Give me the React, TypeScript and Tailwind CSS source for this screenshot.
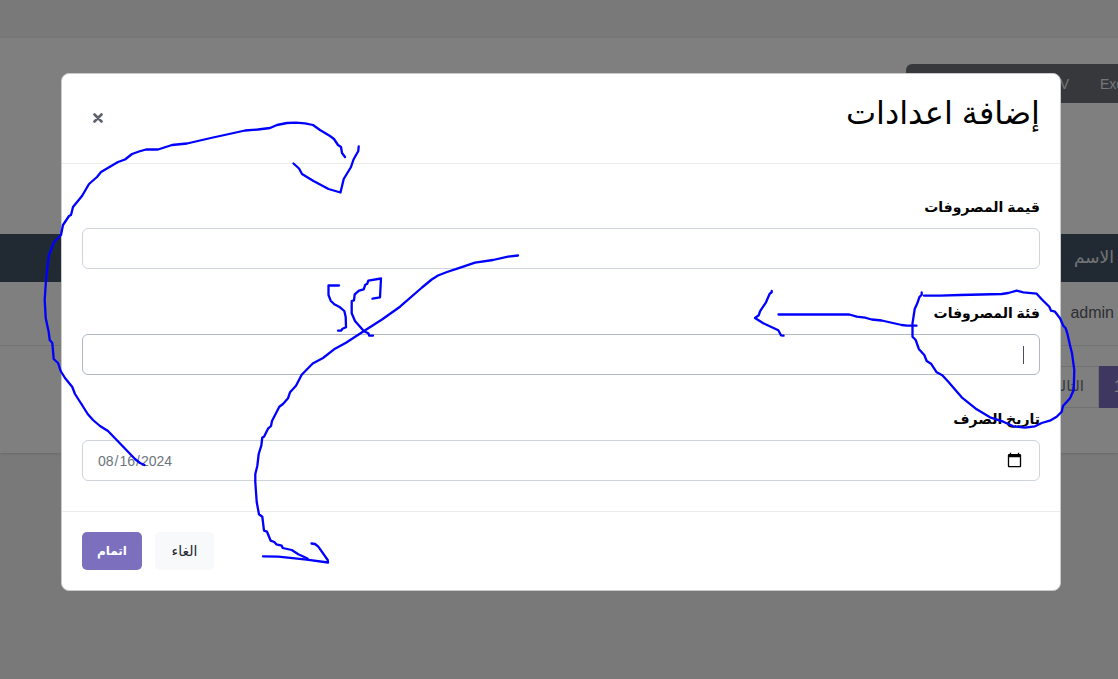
const strokes = [
  "345,157 342,153 341,147 338,145 334,139 330,136 320,130 313,125 305,123.300 296,122.700 287,123 277,125 270,128 258,129.500 245,130.500 220,136 213,137.500 187,143.500 172,145 158,149.500 146,149.500 139,151.500 132,154 125,159.500 118,162 101,172 97,177 89,184 82,196 73,207 71,215 69,216 63,225 61,235 54,242 48.700,256 46,280 44.700,300 45.700,318 48.700,332 49.700,340 52.300,343 53.700,359 58,363 60.700,371 65,378 72.300,387 75,394 83.300,407 87.700,414 93,420 100,426 108,431 135,459 140,463 144.500,465",
  "293.500,163.500 299,168.500 302,174 313.500,181 328.500,189 340.500,192.500 343.700,179 351,167 353.500,159.500 358.300,151 358.700,146.500",
  "518,255.500 508,256.700 493,260 475,262.700 458,268.300 447,272 438,275.500 431.700,279.500 422,287.500 400,306.700 382,319.500 364,331 346,342.700 335,348.700 323,358 312.700,363.500 301.700,374.700 296,385.700 290,392.300 288,398.300 283,404 279.300,406.700 272,421 271,426 268,428.700 264,436.700 262.300,437.500 261.300,445.700 258.700,454 257.300,466 255.300,474 255.300,482 256.700,502 259,514.300 262.300,516.700 264,530.700 267,531.700 270.700,540.700 274.300,542 276.300,544.300 281.700,545.700 282.700,548 291.700,550 298.300,554.300 307.500,558.500",
  "263,556.300 278.300,556.700 306.700,559.700 328,562.500 327.700,560 318.300,546.700 315,544 311.500,543.500",
  "339,285.500 328.500,285.500 328.500,295 330.700,300.700 334.300,304.300 340,307.300 344.300,311 345.700,317 346,327.300 342.500,328.700 341,330.700 338,330.700",
  "372.500,298.700 380,297.300 381,278.500 368.300,280.700 367.300,283.700 365.300,284.700 363.700,289.300 359,290.700 354.700,294.300 354,300.300 351.700,301 351.700,313.300 355,321 364,331.300 368.300,333.300 369.300,335.700 373,335.700",
  "771.700,291 771.700,292.300 769.700,293.700 766,302.300 760,311.300 758.700,315.300 755,318 763.300,323.300 778.300,330.300 781,335.300 783.500,335.700",
  "778.500,314.500 849.300,314.500 856.700,316.700 865,317.700 871.700,319.500 881.700,320.500 901.700,325 907,325.700 916.500,325.700",
  "921.700,292.500 921.700,294.700 919.300,297.300 917.300,303.300 914.700,309 912.500,323.300 912.500,336.700 915.700,340 919,349.300 924.300,355 926.700,361 931,363.700 936.700,372.300 942.300,375.300 948.300,381.700 961.700,397.300 976.700,409.300 990,417.300 1003.300,421.700 1013.300,426.300 1025,427.700 1035,426.300 1041.700,423 1050.700,420.300 1056.700,416.700 1061.700,411.700 1063,406 1070,398.300 1073.700,390 1074.300,370 1072,353.300 1069.700,344 1067.300,333.300 1065.700,328.300 1063.300,325.700 1060,318.300 1055,311.700 1051,310.700 1049.300,306.700 1041.700,299.300 1036.700,293.700 1023.300,292.300 1016.700,290.700 1008.300,293 1001.700,294 960,295 940,295.700 924,295.700",
];

const labelClass =
  "block h-[22px] text-sm leading-[22px] font-semibold text-black";
const inputClass =
  "mt-2.5 block h-[41px] w-full rounded-md border bg-white px-3.5 text-[#6c757d] outline-none";

function BackgroundPage() {
  return (
    <div className="min-h-screen overflow-hidden bg-[#f2f2f2]">
      <header className="h-[38px]" />
      <main className="bg-white pt-[26px] pb-[45px] shadow-sm">
        <div dir="ltr" className="flex justify-end">
          <div className="flex h-[39px] w-[212px] overflow-hidden rounded-tl-md bg-[#6c7178] text-sm text-[#e9ecef]">
            <button className="w-[178px] shrink-0 pr-[15px] text-right">CSV</button>
            <button className="w-16 shrink-0 pl-4 text-left">Excel</button>
          </div>
        </div>
        <table className="mt-[131px] w-full border-collapse text-base">
          <thead>
            <tr className="h-12 bg-[#425466] text-[#e4e7ea]">
              <th className="px-1 text-right text-[17px] font-normal">الاسم</th>
            </tr>
          </thead>
          <tbody>
            <tr className="h-[63px] border-b border-[#e4e6e9] text-[#5b6068]">
              <td className="px-1 text-right">admin</td>
            </tr>
          </tbody>
        </table>
        <nav dir="ltr" className="mt-5 flex h-[42px] justify-end overflow-hidden">
          <button className="w-16 border border-[#dee2e6] pr-3.5 text-right text-[15px] text-[#6c757d]">
            التالي
          </button>
          <button className="w-[19px] overflow-hidden bg-[#7c6fbe] pl-[15px] text-left text-white">
            1
          </button>
        </nav>
      </main>
    </div>
  );
}

export default function App() {
  return (
    <div
      dir="rtl"
      className="relative min-h-screen overflow-hidden font-['Liberation_Sans','DejaVu_Sans',sans-serif]"
    >
      <BackgroundPage />

      <div className="absolute inset-0 bg-black/50 pt-[73px] pr-[57px] pl-[61px]">
        <form
          role="dialog"
          aria-labelledby="dialog-title"
          className="rounded-lg border border-[#c8cacc] bg-white"
          onSubmit={(e) => e.preventDefault()}
        >
          <div className="flex h-[90px] items-center justify-between border-b border-[#e9ebec] px-5 pb-0.5">
            <h2 id="dialog-title" className="pb-2.5 text-[32px] leading-[48px] text-black">
              إضافة اعدادات
            </h2>
            <button type="button" aria-label="اغلاق" className="flex size-8 items-center justify-center">
              <svg viewBox="0 0 10 10" className="size-2.5" stroke="#5b626b" strokeWidth="2.600" strokeLinecap="round">
                <path d="M1.500 1.500 8.500 8.500M8.500 1.500 1.500 8.500" />
              </svg>
            </button>
          </div>

          <div className="flex flex-col gap-[33px] px-5 pt-8 pb-[30px]">
            <div>
              <label htmlFor="amount" className={labelClass}>قيمة المصروفات</label>
              <input id="amount" type="text" className={`${inputClass} border-[#ced4da]`} />
            </div>
            <div>
              <label htmlFor="category" className={labelClass}>فئة المصروفات</label>
              <div className="relative">
                <input id="category" type="text" className={`${inputClass} border-[#b1b7be]`} />
                <span className="absolute top-3 right-4 h-[18px] w-px bg-[#495057]" />
              </div>
            </div>
            <div>
              <label htmlFor="date" className={labelClass}>تاريخ الصرف</label>
              <input
                id="date"
                type="date"
                dir="ltr"
                defaultValue="2024-08-16"
                className={`${inputClass} border-[#ced4da] text-sm [&::-webkit-calendar-picker-indicator]:size-[17px]`}
              />
            </div>
          </div>

          <div className="flex justify-end gap-[13px] border-t border-[#e9ebec] p-5 text-sm">
            <button type="button" className="h-[38px] w-[59px] rounded-[5px] bg-[#f8f9fb] text-[#212529]">
              الغاء
            </button>
            <button type="submit" className="h-[38px] w-[60px] rounded-[5px] bg-[#7c6fbe] text-xs font-semibold text-white">
              اتمام
            </button>
          </div>
        </form>
      </div>

      <svg
        aria-hidden="true"
        viewBox="0 0 1118 679"
        className="pointer-events-none absolute top-0 left-0 w-full"
        fill="none"
        stroke="#0000ff"
        strokeWidth="2.300"
        strokeLinecap="round"
        strokeLinejoin="round"
      >
        {strokes.map((points) => (
          <polyline key={points} points={points} />
        ))}
      </svg>
    </div>
  );
}
